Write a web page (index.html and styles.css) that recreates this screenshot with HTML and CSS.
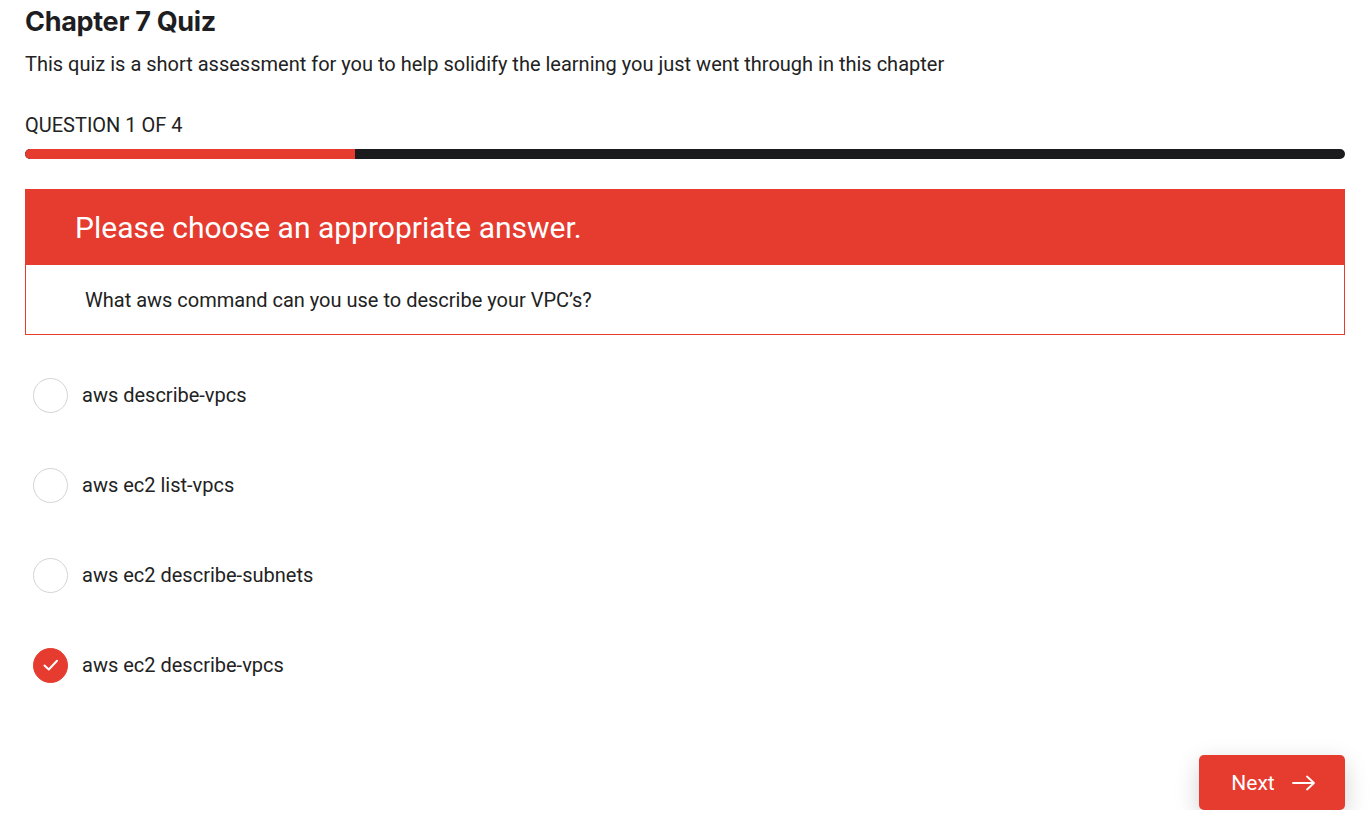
FILE: index.html
```html
<!DOCTYPE html>
<html>
<head>
<meta charset="utf-8">
<link rel="stylesheet" href="styles.css">
</head>
<body>
<main class="page">
  <h1 class="title">Chapter 7 Quiz</h1>
  <p class="intro">This quiz is a short assessment for you to help solidify the learning you just went through in this chapter</p>
  <div class="counter">QUESTION 1 OF 4</div>
  <div class="progress"><div class="progress-fill" style="width:25%"></div></div>
  <section class="question">
    <div class="question-head">Please choose an appropriate answer.</div>
    <div class="question-body">What aws command can you use to describe your VPC’s?</div>
  </section>
  <ul class="options">
    <li class="option"><span class="radio"></span><span>aws describe-vpcs</span></li>
    <li class="option"><span class="radio"></span><span>aws ec2 list-vpcs</span></li>
    <li class="option"><span class="radio"></span><span>aws ec2 describe-subnets</span></li>
    <li class="option"><span class="radio checked"><svg width="20" height="20" viewBox="0 0 20 20"><path d="M3.5 10.5 L7.8 14.5 L16 5.8" fill="none" stroke="#fff" stroke-width="2" stroke-linecap="round" stroke-linejoin="round"/></svg></span><span>aws ec2 describe-vpcs</span></li>
  </ul>
  <div class="actions">
    <button class="next">Next <svg width="26" height="16" viewBox="0 0 26 16"><path d="M2 8 H23 M16 1.5 L23 8 L16 14.5" fill="none" stroke="#fff" stroke-width="1.8" stroke-linecap="round" stroke-linejoin="round"/></svg></button>
  </div>
</main>
</body>
</html>
```
FILE: styles.css
```css
* { box-sizing: border-box; }
html, body { margin: 0; padding: 0; background: #fff; }
body { font-family: Roboto, "Liberation Sans", sans-serif; color: #222; }
.page { padding: 0 24px 0 25px; }
.title {
  font-family: Inter, "Liberation Sans", sans-serif;
  font-weight: 700;
  font-size: 27px;
  letter-spacing: -0.3px;
  margin: 0;
  padding-top: 6px;
  line-height: 32px;
  color: #1e1e22;
}
.intro {
  margin: 14px 0 0;
  font-size: 20px;
  line-height: 24px;
  color: #222;
}
.counter {
  margin-top: 37px;
  font-size: 20px;
  line-height: 24px;
  color: #222;
}
.progress {
  margin-top: 12px;
  height: 10px;
  background: #1b1b1d;
  border-radius: 5px;
  overflow: hidden;
}
.progress-fill { height: 100%; background: #e63b2f; border-radius: 5px 0 0 5px; }
.question { margin-top: 30px; }
.question-head {
  background: #e63b2f;
  color: #fff;
  height: 76px;
  display: flex;
  align-items: center;
  padding-left: 50px;
  font-size: 30px;
}
.question-body {
  border: 1px solid #e63b2f;
  border-top: none;
  height: 70px;
  display: flex;
  align-items: center;
  padding-left: 59px;
  font-size: 20px;
  color: #222;
}
.options { list-style: none; margin: 15px 0 0; padding: 0 0 0 8px; }
.option {
  display: flex;
  align-items: center;
  gap: 14px;
  height: 90px;
  font-size: 20px;
  color: #222;
}
.radio {
  width: 35px;
  height: 35px;
  border-radius: 50%;
  border: 1px solid #d4d4d4;
  display: flex;
  align-items: center;
  justify-content: center;
  flex: none;
}
.radio.checked { background: #e63b2f; border-color: #e63b2f; }
.actions { display: flex; justify-content: flex-end; margin-top: 45px; }
.next {
  background: #e63b2f;
  color: #fff;
  border: none;
  border-radius: 5px;
  width: 146px;
  height: 55px;
  font-family: Roboto, "Liberation Sans", sans-serif;
  font-size: 21px;
  display: flex;
  align-items: center;
  justify-content: center;
  gap: 16px;
  box-shadow: 0 8px 24px rgba(0,0,0,0.18);
  padding: 0 0 0 4px;
}
```
